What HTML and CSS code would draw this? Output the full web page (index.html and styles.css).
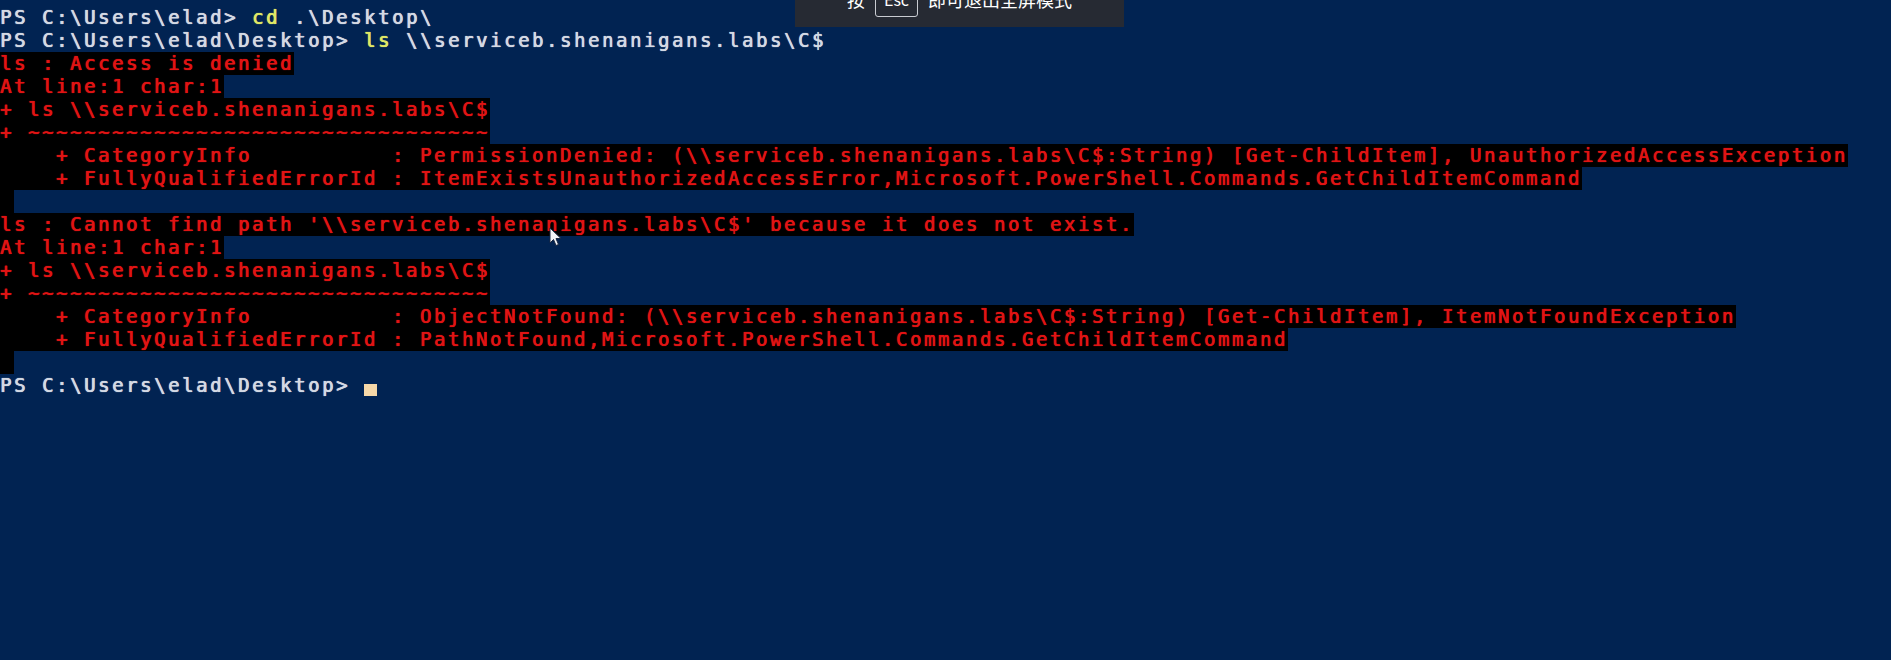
FILE: index.html
```html
<!DOCTYPE html>
<html lang="zh-CN">

<head>
    <meta charset="UTF-8">
    <meta name="viewport" content="width=device-width, initial-scale=1.0">
    <title>Windows PowerShell</title>
    <link rel="stylesheet" href="styles.css">
</head>

<body>
    <div class="console">
        <div class="line">PS C:\Users\elad&gt; <span class="cmd">cd</span> .\Desktop\</div>
        <div class="line">PS C:\Users\elad\Desktop&gt; <span class="cmd">ls</span> \\serviceb.shenanigans.labs\C$</div>
        <div class="line"><span class="err">ls : Access is denied</span></div>
        <div class="line"><span class="err">At line:1 char:1</span></div>
        <div class="line"><span class="err">+ ls \\serviceb.shenanigans.labs\C$</span></div>
        <div class="line"><span class="err">+ ~~~~~~~~~~~~~~~~~~~~~~~~~~~~~~~~~</span></div>
        <div class="line"><span class="err">    + CategoryInfo          : PermissionDenied: (\\serviceb.shenanigans.labs\C$:String) [Get-ChildItem], UnauthorizedAccessException</span></div>
        <div class="line"><span class="err">    + FullyQualifiedErrorId : ItemExistsUnauthorizedAccessError,Microsoft.PowerShell.Commands.GetChildItemCommand</span></div>
        <div class="line"><span class="err"> </span></div>
        <div class="line"><span class="err">ls : Cannot find path '\\serviceb.shenanigans.labs\C$' because it does not exist.</span></div>
        <div class="line"><span class="err">At line:1 char:1</span></div>
        <div class="line"><span class="err">+ ls \\serviceb.shenanigans.labs\C$</span></div>
        <div class="line"><span class="err">+ ~~~~~~~~~~~~~~~~~~~~~~~~~~~~~~~~~</span></div>
        <div class="line"><span class="err">    + CategoryInfo          : ObjectNotFound: (\\serviceb.shenanigans.labs\C$:String) [Get-ChildItem], ItemNotFoundException</span></div>
        <div class="line"><span class="err">    + FullyQualifiedErrorId : PathNotFound,Microsoft.PowerShell.Commands.GetChildItemCommand</span></div>
        <div class="line"><span class="err"> </span></div>
        <div class="line">PS C:\Users\elad\Desktop&gt; <span class="cursor"></span></div>
    </div>

    <!-- fullscreen notice, slid half out of view -->
    <div class="toast">
        <span>按</span>
        <span class="key">Esc</span>
        <span>即可退出全屏模式</span>
    </div>

    <svg class="pointer" width="14" height="20" viewBox="0 0 14 20">
        <path d="M1 1 L1 16 L4.5 12.5 L7 18.5 L9.5 17.5 L7 11.5 L12 11.5 Z" fill="#f2f4f8" stroke="#1a2740" stroke-width="1" />
    </svg>
</body>

</html>
```
FILE: styles.css
```css
:root {
  --ps-blue: #012352;
  --ps-text: #d3d9e4;
  --ps-yellow: #dfe866;
  --ps-red: #e01414;
}
body {
  margin: 0;
  padding: 0;
  background-color: var(--ps-blue);
  height: 100vh;
  overflow: hidden;
}
.console {
  padding-top: 6px;
  font-family: "DejaVu Sans Mono", "Liberation Mono", monospace;
  font-size: 19px;
  letter-spacing: 2.56px;
  color: var(--ps-text);
}
.console .line {
  height: 23px;
  line-height: 23px;
  white-space: pre;
  text-shadow: 0.4px 0 0 currentColor, 0 0 1px currentColor;
}
.console .cmd {
  color: var(--ps-yellow);
}
.console .err {
  display: inline-block;
  height: 23px;
  color: var(--ps-red);
  background-color: #000;
}
.console .cursor {
  display: inline-block;
  width: 13px;
  height: 12px;
  vertical-align: -4px;
  background-color: #f6d8a8;
}
.toast {
  position: fixed;
  top: -20px;
  left: 795px;
  width: 329px;
  height: 47px;
  box-sizing: border-box;
  padding-bottom: 9px;
  display: flex;
  align-items: center;
  justify-content: center;
  column-gap: 10px;
  background-color: #262a33;
  color: #fff;
  font-family: "Noto Sans CJK SC", "Noto Sans", sans-serif;
  font-size: 18px;
}
.toast .key {
  width: 43px;
  height: 36px;
  box-sizing: border-box;
  display: flex;
  align-items: center;
  justify-content: center;
  border: 1px solid #c9ccd2;
  border-radius: 3px;
  font-size: 16px;
}
.pointer {
  position: fixed;
  left: 549px;
  top: 227px;
}
```
